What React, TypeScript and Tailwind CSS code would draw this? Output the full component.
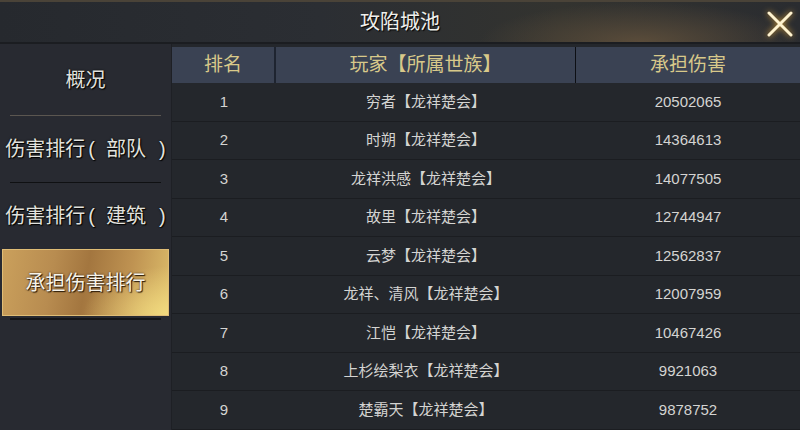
import React from 'react';

const rows = [
  { rank: 1, name: '穷者', dmg: '20502065' },
  { rank: 2, name: '时朔', dmg: '14364613' },
  { rank: 3, name: '龙祥洪感', dmg: '14077505' },
  { rank: 4, name: '故里', dmg: '12744947' },
  { rank: 5, name: '云梦', dmg: '12562837' },
  { rank: 6, name: '龙祥、清风', dmg: '12007959' },
  { rank: 7, name: '江恺', dmg: '10467426' },
  { rank: 8, name: '上杉绘梨衣', dmg: '9921063' },
  { rank: 9, name: '楚霸天', dmg: '9878752' },
];

const font = "font-['Liberation_Sans','Noto_Sans_CJK_SC',sans-serif]";
const menuText = 'text-[20px] text-[#e2e2de] [text-shadow:1px_1px_1px_#000,0_0_2px_#000]';

function CloseIcon() {
  return (
    <svg width="26" height="26" viewBox="0 0 26 26" className="drop-shadow-[0_0_3px_#d9a13a]">
      <path d="M2 2 L24 24 M24 2 L2 24" stroke="#fff3cf" strokeWidth="3" strokeLinecap="round" />
    </svg>
  );
}

// menu label with the loose paren spacing of the game font
function Ranked({ kind }: { kind: string }) {
  return (
    <span className="whitespace-nowrap">
      伤害排行<span className="ml-[3px] mr-[11px]">(</span>{kind}<span className="ml-[13px]">)</span>
    </span>
  );
}

export default function App() {
  return (
    <div className={`w-[800px] h-[430px] overflow-hidden flex flex-col bg-[#25282e] ${font}`}>
      {/* Title bar */}
      <div className="h-[44px] shrink-0 relative flex items-center justify-center border-t-2 border-t-[#4a4338] border-b-2 border-b-[#1b1d21] bg-[radial-gradient(ellipse_160px_40px_at_640px_40px,#5a4c3a,transparent),linear-gradient(90deg,#26292e_0%,#2b2e33_40%,#33332f_70%,#2a2c30_100%)]">
        <span className="text-[20px] text-[#f0f0ec] [text-shadow:1px_1px_1px_#000]">攻陷城池</span>
        <div className="absolute right-[7px] top-[9px]">
          <CloseIcon />
        </div>
      </div>

      <div className="flex flex-1 min-h-0">
        {/* Left menu */}
        <div className="w-[172px] shrink-0 flex flex-col bg-[#282a31] border-r border-[#1e2025]">
          <div className={`h-[71px] flex items-center justify-center ${menuText}`}>概况</div>
          <div className="mx-[10px] h-px bg-[#5b5650]" />
          <div className={`h-[66px] flex items-center justify-center ${menuText}`}>
            <Ranked kind="部队" />
          </div>
          <div className="mx-[10px] h-px bg-[#0f1012]" />
          <div className={`h-[66px] flex items-center justify-center ${menuText}`}>
            <Ranked kind="建筑" />
          </div>
          <div className="mx-[2px] h-[67px] flex items-center justify-center border border-[#e0bd76] bg-[radial-gradient(ellipse_90px_50px_at_170px_66px,#f3dc80,transparent),linear-gradient(100deg,#caa05c_0%,#b88c50_30%,#a3763f_50%,#bf9352_75%,#dcbc6a_100%)]">
            <span className="text-[20px] text-[#f6f3ea] [text-shadow:1px_1px_1px_#2a1a08,0_0_2px_#3a2410]">承担伤害排行</span>
          </div>
          <div className="mx-[10px] mt-[2px] h-[2px] bg-[#141518]" />
        </div>

        {/* Table */}
        <div className="flex-1 flex flex-col pt-[3px] bg-[#24272c]">
          <div className="h-[36px] shrink-0 flex items-center bg-[#3a4253] text-[19px] text-[#d8c98a]">
            <div className="w-[104px] h-full flex items-center justify-center border-r-2 border-[#1e2430]">排名</div>
            <div className="w-[300px] h-full flex items-center justify-center border-r border-[#0d0f14]">玩家【所属世族】</div>
            <div className="flex-1 h-full flex items-center justify-center">承担伤害</div>
          </div>
          <div className="flex flex-col">
            {rows.map((r) => (
              <div key={r.rank} className="h-[38.5px] shrink-0 flex items-center border-b border-[#1b1d21] text-[15px] text-[#d4d4d2]">
                <div className="w-[104px] text-center">{r.rank}</div>
                <div className="w-[300px] text-center">{r.name}【龙祥楚会】</div>
                <div className="flex-1 text-center">{r.dmg}</div>
              </div>
            ))}
          </div>
        </div>
      </div>
    </div>
  );
}
